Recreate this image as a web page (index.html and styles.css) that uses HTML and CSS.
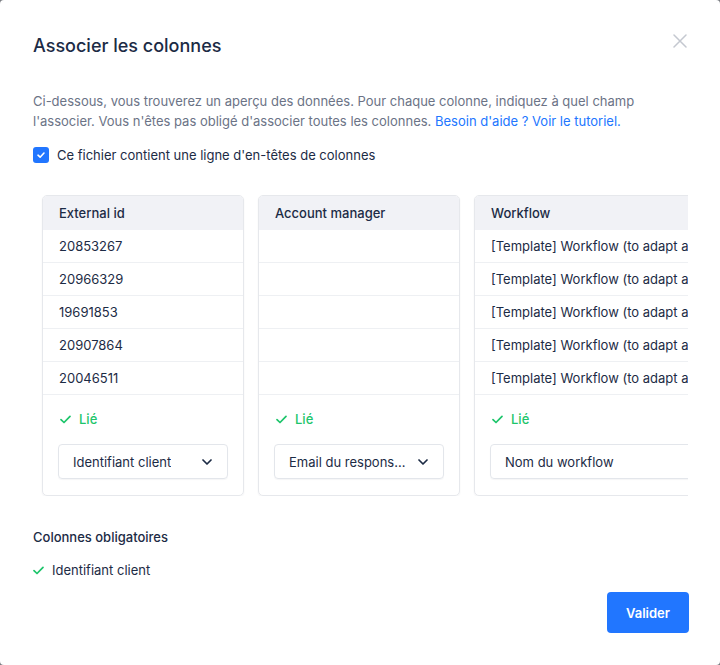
FILE: index.html
```html
<!DOCTYPE html>
<html lang="fr">
<head>
    <meta charset="UTF-8">
    <title>Associer les colonnes</title>
    <link rel="stylesheet" href="styles.css">
</head>
<body>
    <div class="modal">
        <div class="modal-header">
            <h2>Associer les colonnes</h2>
            <button class="close" aria-label="Fermer">
                <svg width="14" height="14" viewBox="0 0 14 14"><path d="M1 1L13 13M13 1L1 13" stroke="#c4c8d0" stroke-width="1.5" fill="none" stroke-linecap="round"/></svg>
            </button>
        </div>

        <p class="intro">Ci-dessous, vous trouverez un aperçu des données. Pour chaque colonne, indiquez à quel champ l'associer. Vous n'êtes pas obligé d'associer toutes les colonnes. <a href="#">Besoin d'aide ? Voir le tutoriel.</a></p>

        <label class="check-row">
            <span class="checkbox">
                <svg width="10" height="10" viewBox="0 0 10 10"><path d="M2 5.2L4.1 7.2L8 3" stroke="#fff" stroke-width="1.6" fill="none" stroke-linecap="round" stroke-linejoin="round"/></svg>
            </span>
            Ce fichier contient une ligne d'en-têtes de colonnes
        </label>

        <div class="columns">
            <div class="col-card">
                <div class="col-head">External id</div>
                <div class="col-row">20853267</div>
                <div class="col-row">20966329</div>
                <div class="col-row">19691853</div>
                <div class="col-row">20907864</div>
                <div class="col-row">20046511</div>
                <div class="col-foot">
                    <div class="linked"><svg width="11" height="9" viewBox="0 0 11 9"><path d="M1 4.6L4 7.5L10 1.3" stroke="#1dc56b" stroke-width="1.7" fill="none" stroke-linecap="round" stroke-linejoin="round"/></svg>Lié</div>
                    <div class="select"><span>Identifiant client</span><svg width="10" height="6" viewBox="0 0 10 6"><path d="M1 1L5 5L9 1" stroke="#1c2b45" stroke-width="1.7" fill="none" stroke-linecap="round" stroke-linejoin="round"/></svg></div>
                </div>
            </div>
            <div class="col-card">
                <div class="col-head">Account manager</div>
                <div class="col-row"></div>
                <div class="col-row"></div>
                <div class="col-row"></div>
                <div class="col-row"></div>
                <div class="col-row"></div>
                <div class="col-foot">
                    <div class="linked"><svg width="11" height="9" viewBox="0 0 11 9"><path d="M1 4.6L4 7.5L10 1.3" stroke="#1dc56b" stroke-width="1.7" fill="none" stroke-linecap="round" stroke-linejoin="round"/></svg>Lié</div>
                    <div class="select"><span>Email du responsable de compte</span><svg width="10" height="6" viewBox="0 0 10 6"><path d="M1 1L5 5L9 1" stroke="#1c2b45" stroke-width="1.7" fill="none" stroke-linecap="round" stroke-linejoin="round"/></svg></div>
                </div>
            </div>
            <div class="col-card col-wide">
                <div class="col-head">Workflow</div>
                <div class="col-row">[Template] Workflow (to adapt and rename)</div>
                <div class="col-row">[Template] Workflow (to adapt and rename)</div>
                <div class="col-row">[Template] Workflow (to adapt and rename)</div>
                <div class="col-row">[Template] Workflow (to adapt and rename)</div>
                <div class="col-row">[Template] Workflow (to adapt and rename)</div>
                <div class="col-foot">
                    <div class="linked"><svg width="11" height="9" viewBox="0 0 11 9"><path d="M1 4.6L4 7.5L10 1.3" stroke="#1dc56b" stroke-width="1.7" fill="none" stroke-linecap="round" stroke-linejoin="round"/></svg>Lié</div>
                    <div class="select"><span>Nom du workflow</span><svg width="10" height="6" viewBox="0 0 10 6"><path d="M1 1L5 5L9 1" stroke="#1c2b45" stroke-width="1.7" fill="none" stroke-linecap="round" stroke-linejoin="round"/></svg></div>
                </div>
            </div>
        </div>

        <h4 class="required-title">Colonnes obligatoires</h4>
        <div class="required-item"><svg width="11" height="9" viewBox="0 0 11 9"><path d="M1 4.6L4 7.5L10 1.3" stroke="#1dc56b" stroke-width="1.7" fill="none" stroke-linecap="round" stroke-linejoin="round"/></svg>Identifiant client</div>

        <div class="actions">
            <button class="btn-primary">Valider</button>
        </div>
    </div>
</body>
</html>
```

FILE: styles.css
```css
/* Fenêtre d'association des colonnes */
body {
    margin: 0;
    background-color: #7a7d82;
    font-family: Inter, "Noto Sans", sans-serif;
    color: #1c2b45;
}

.modal {
    background-color: white;
    border-radius: 4px;
    width: 720px;
    height: 665px;
    box-sizing: border-box;
    padding: 34px 31px 32px 33px;
    overflow: hidden;
}

.modal-header {
    display: flex;
    justify-content: space-between;
    align-items: center;
}

.modal-header h2 {
    margin: 0;
    font-size: 18px;
    line-height: 24px;
    font-weight: 500;
}

.close {
    border: none;
    background: none;
    padding: 0;
    margin-right: 2px;
    margin-top: -10px;
    cursor: pointer;
    display: flex;
}

.intro {
    margin: 33px 0 0;
    font-size: 13px;
    line-height: 20px;
    color: #6b7386;
    padding-right: 40px;
}

.intro a {
    color: #2176ff;
    text-decoration: none;
}

.check-row {
    display: flex;
    align-items: center;
    gap: 8px;
    margin-top: 16px;
    font-size: 13px;
    line-height: 16px;
}

.checkbox {
    width: 16px;
    height: 16px;
    border-radius: 3px;
    background-color: #2176ff;
    display: flex;
    align-items: center;
    justify-content: center;
}

.columns {
    display: flex;
    gap: 14px;
    margin-top: 32px;
    width: 646px;
    padding-left: 9px;
    overflow: hidden;
}

.col-card {
    flex: 0 0 202px;
    border: 1px solid #e6e8ec;
    border-radius: 5px;
    box-shadow: 0 1px 2px rgba(20, 30, 50, 0.06);
    box-sizing: border-box;
    overflow: hidden;
}

.col-wide {
    flex-basis: 270px;
}

.col-head {
    background-color: #f1f2f6;
    height: 34px;
    line-height: 34px;
    padding: 0 16px;
    font-size: 13px;
    font-weight: 500;
}

.col-row {
    height: 33px;
    line-height: 32px;
    padding: 0 16px;
    border-bottom: 1px solid #eef0f3;
    box-sizing: border-box;
    font-size: 13px;
    white-space: nowrap;
    overflow: hidden;
}

.col-foot {
    padding: 16px 15px 16px;
}

.linked {
    display: flex;
    align-items: center;
    gap: 8px;
    color: #1dc56b;
    font-size: 13px;
    font-weight: 500;
    line-height: 16px;
    padding-left: 2px;
}

.select {
    margin-top: 17px;
    height: 35px;
    border: 1px solid #e3e6eb;
    border-radius: 4px;
    box-sizing: border-box;
    display: flex;
    align-items: center;
    justify-content: space-between;
    gap: 10px;
    padding: 0 15px 0 14px;
    font-size: 13px;
    box-shadow: 0 1px 1px rgba(20, 30, 50, 0.04);
}

.select span {
    white-space: nowrap;
    overflow: hidden;
    text-overflow: ellipsis;
}

.select svg {
    flex-shrink: 0;
}

.required-title {
    margin: 33px 0 0;
    font-size: 13px;
    line-height: 16px;
    font-weight: 500;
}

.required-item {
    display: flex;
    align-items: center;
    gap: 8px;
    margin-top: 17px;
    font-size: 13px;
    line-height: 16px;
}

.actions {
    display: flex;
    justify-content: flex-end;
    margin-top: 14px;
}

.btn-primary {
    width: 82px;
    height: 41px;
    background-color: #2176ff;
    color: white;
    border: none;
    border-radius: 4px;
    font-family: inherit;
    font-size: 13px;
    font-weight: 600;
    cursor: pointer;
}
```
